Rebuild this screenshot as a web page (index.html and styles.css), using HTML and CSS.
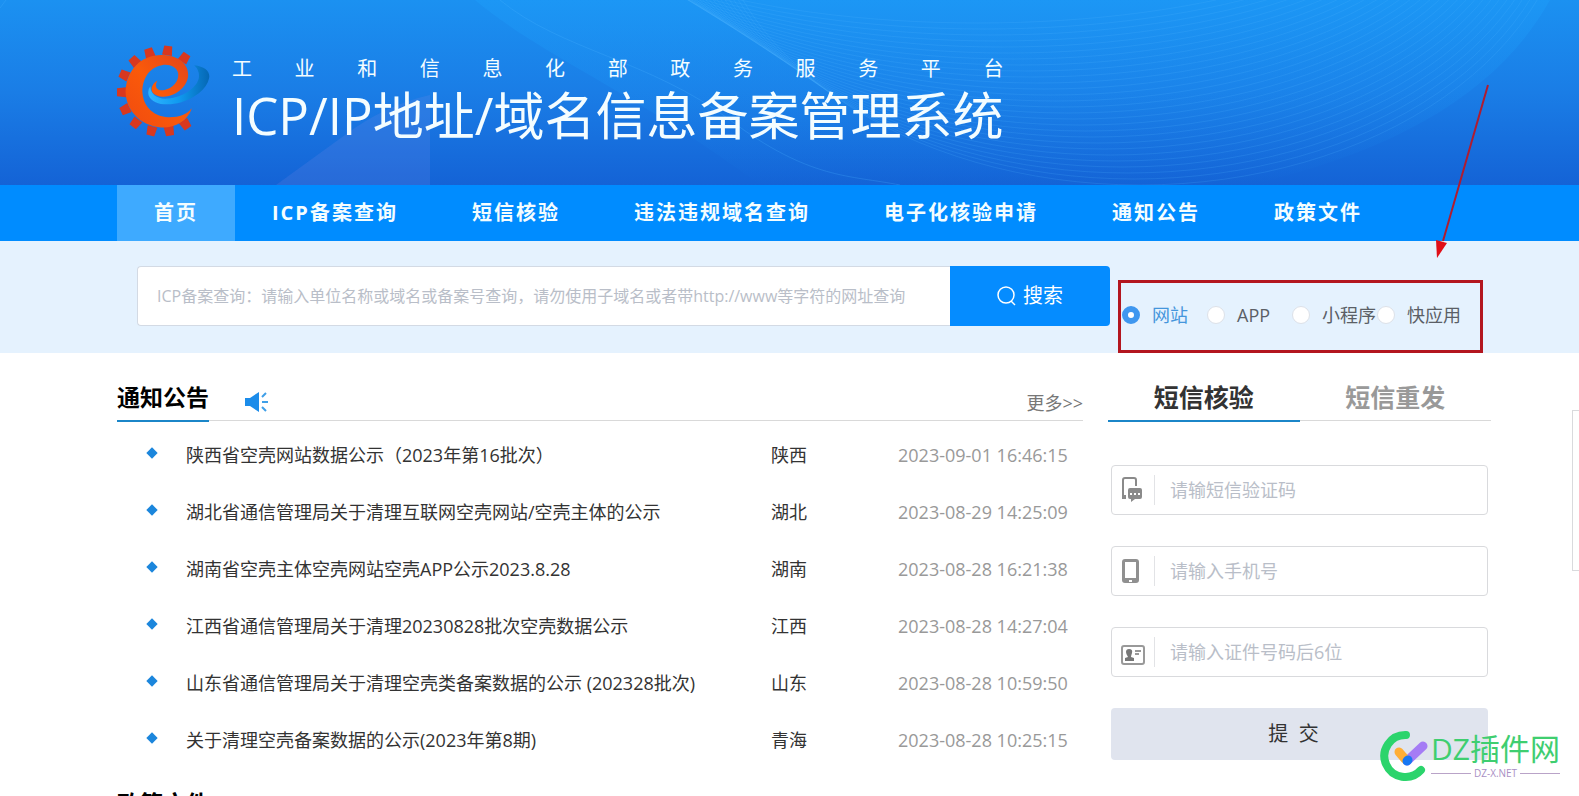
FILE: index.html
```
<!DOCTYPE html>
<html lang="zh-CN">
<head>
<meta charset="utf-8">
<meta name="viewport" content="width=device-width, initial-scale=1">
<title>ICP/IP地址/域名信息备案管理系统</title>
<link rel="stylesheet" href="styles.css">
</head>
<body>
<header class="banner">
  <svg class="banner-art" viewBox="0 0 1579 185" preserveAspectRatio="none" aria-hidden="true">
    <defs>
      <linearGradient id="glow" x1="0" y1="0" x2="0" y2="1">
        <stop offset="0" stop-color="#1ea4ff" stop-opacity=".3"/>
        <stop offset="1" stop-color="#1ea4ff" stop-opacity="0"/>
      </linearGradient>
    </defs>
    <path fill="url(#glow)" d="M475 0C540 55 640 95 760 185H1250C1400 150 1500 90 1550 0Z"/>
    <path fill="#8a8fe8" fill-opacity=".17" d="M276 185L345 135Q385 105 430 95V185Z"/>
    <path fill="none" stroke="#4ab4ff" stroke-opacity=".25" d="M500 0C560 50 650 60 730 120S850 175 900 185M0 8L6 0"/>
    <g fill="none" stroke="#55b8ff" stroke-opacity=".18">
      <ellipse cx="1140" cy="-115" rx="430" ry="300"/>
      <ellipse cx="1134" cy="-115" rx="430" ry="294"/>
      <ellipse cx="1128" cy="-115" rx="430" ry="288"/>
      <ellipse cx="1122" cy="-115" rx="430" ry="282"/>
      <ellipse cx="1116" cy="-115" rx="430" ry="276"/>
      <ellipse cx="1110" cy="-115" rx="430" ry="270"/>
      <ellipse cx="1104" cy="-115" rx="430" ry="264"/>
      <ellipse cx="1098" cy="-115" rx="430" ry="258"/>
      <ellipse cx="1092" cy="-115" rx="430" ry="252"/>
      <ellipse cx="1086" cy="-115" rx="430" ry="246"/>
      <ellipse cx="1080" cy="-115" rx="430" ry="240"/>
      <ellipse cx="1074" cy="-115" rx="430" ry="234"/>
      <ellipse cx="1068" cy="-115" rx="430" ry="228"/>
      <ellipse cx="1062" cy="-115" rx="430" ry="222"/>
      <ellipse cx="1056" cy="-115" rx="430" ry="216"/>
      <ellipse cx="1050" cy="-115" rx="430" ry="210"/>
      <ellipse cx="1044" cy="-115" rx="430" ry="204"/>
      <ellipse cx="1038" cy="-115" rx="430" ry="198"/>
      <ellipse cx="1032" cy="-115" rx="430" ry="192"/>
      <ellipse cx="1026" cy="-115" rx="430" ry="186"/>
      <ellipse cx="1020" cy="-115" rx="430" ry="180"/>
      <ellipse cx="1014" cy="-115" rx="430" ry="174"/>
      <ellipse cx="1008" cy="-115" rx="430" ry="168"/>
      <ellipse cx="1002" cy="-115" rx="430" ry="162"/>
      <ellipse cx="996" cy="-115" rx="430" ry="156"/>
      <ellipse cx="990" cy="-115" rx="430" ry="150"/>
      <ellipse cx="984" cy="-115" rx="430" ry="144"/>
      <ellipse cx="978" cy="-115" rx="430" ry="138"/>
    </g>
  </svg>
  <svg class="logo" viewBox="48 42 284 284" role="img" aria-label="工业和信息化部">
    <defs>
      <linearGradient id="swoosh" x1="0" y1="0" x2="1" y2="0">
        <stop offset="0" stop-color="#2fb4ff"/><stop offset=".5" stop-color="#109af0"/><stop offset="1" stop-color="#0567b4"/>
      </linearGradient>
      <linearGradient id="flame" x1="1" y1="0" x2="0" y2="1">
        <stop offset="0" stop-color="#e0431d"/><stop offset=".5" stop-color="#fa5a0a"/><stop offset="1" stop-color="#f04a10"/>
      </linearGradient>
      <path id="tooth" d="M-12 -14H12L15 14H-15Z"/>
    </defs>
    <g fill="#d8381f">
      <use href="#tooth" transform="translate(255 84) rotate(33)"/>
      <use href="#tooth" transform="translate(204 62) rotate(8)"/>
      <use href="#tooth" transform="translate(149 69) rotate(-18)"/>
      <use href="#tooth" transform="translate(104 94) rotate(-42)"/>
      <use href="#tooth" transform="translate(73 136) rotate(-66)"/>
      <use href="#tooth" transform="translate(65 188) rotate(-90)"/>
      <use href="#tooth" transform="translate(76 240) rotate(-116)"/>
      <use href="#tooth" transform="translate(107 281) rotate(-142)"/>
      <use href="#tooth" transform="translate(155 305) rotate(-166)"/>
      <use href="#tooth" transform="translate(209 305) rotate(170)"/>
      <use href="#tooth" transform="translate(258 285) rotate(146)"/>
    </g>
    <path fill="url(#swoosh)" d="M284 106C318 110 334 126 329 146C322 178 285 206 245 218C200 231 158 224 147 198Q142 182 152 170C152 196 175 210 205 207C250 202 290 176 298 146Q302 122 284 106Z"/>
    <path fill="url(#flame)" d="M277 236C264 276 224 296 185 294C120 290 77 240 77 185C79 120 125 75 185 75C240 75 268 105 266 138C262 176 222 203 188 201C150 198 146 170 173 152C161 174 175 185 195 181C220 176 238 155 236 132C233 110 207 102 187 106C147 112 126 150 128 190C132 235 165 261 205 263C238 264 262 255 277 236Z"/>
  </svg>
  <div class="brand">
    <p class="brand-sub">工业和信息化部政务服务平台</p>
    <h1 class="brand-title">ICP/IP地址/域名信息备案管理系统</h1>
  </div>
</header>

<nav class="nav">
  <a class="nav-item is-active" href="#">首页</a>
  <a class="nav-item" href="#">ICP备案查询</a>
  <a class="nav-item" href="#">短信核验</a>
  <a class="nav-item" href="#">违法违规域名查询</a>
  <a class="nav-item" href="#">电子化核验申请</a>
  <a class="nav-item" href="#">通知公告</a>
  <a class="nav-item" href="#">政策文件</a>
</nav>

<form class="search">
  <input class="search-input" type="text" aria-label="ICP备案查询" placeholder="ICP备案查询：请输入单位名称或域名或备案号查询，请勿使用子域名或者带http://www等字符的网址查询">
  <button class="search-button" type="button">
    <svg class="search-icon" viewBox="0 0 20 20" aria-hidden="true"><circle cx="9" cy="9" r="8"/><path d="M14 15L18 19"/></svg>
    搜索
  </button>
  <fieldset class="kinds">
    <label class="kind"><input type="radio" name="kind" checked><span>网站</span></label>
    <label class="kind"><input type="radio" name="kind"><span>APP</span></label>
    <label class="kind"><input type="radio" name="kind"><span>小程序</span></label>
    <label class="kind"><input type="radio" name="kind"><span>快应用</span></label>
  </fieldset>
</form>

<main class="content">
  <div class="left">
    <section class="notices">
      <div class="section-head">
        <h2 class="section-title">通知公告</h2>
        <svg class="speaker" viewBox="0 0 24 20" aria-hidden="true">
          <path fill="#1b8cea" d="M0 6H5L14 0V20L5 14H0Z"/>
          <path fill="none" stroke="#3f9fe8" stroke-width="2" d="M17 5L21 1M17 10H23M17 15L21 19"/>
        </svg>
        <a class="more" href="#">更多&gt;&gt;</a>
      </div>
      <table class="notice-table">
        <tbody>
          <tr><td class="mark"><i></i></td><td><a href="#">陕西省空壳网站数据公示（2023年第16批次）</a></td><td class="area">陕西</td><td class="time">2023-09-01 16:46:15</td></tr>
          <tr><td class="mark"><i></i></td><td><a href="#">湖北省通信管理局关于清理互联网空壳网站/空壳主体的公示</a></td><td class="area">湖北</td><td class="time">2023-08-29 14:25:09</td></tr>
          <tr><td class="mark"><i></i></td><td><a href="#">湖南省空壳主体空壳网站空壳APP公示2023.8.28</a></td><td class="area">湖南</td><td class="time">2023-08-28 16:21:38</td></tr>
          <tr><td class="mark"><i></i></td><td><a href="#">江西省通信管理局关于清理20230828批次空壳数据公示</a></td><td class="area">江西</td><td class="time">2023-08-28 14:27:04</td></tr>
          <tr><td class="mark"><i></i></td><td><a href="#">山东省通信管理局关于清理空壳类备案数据的公示 (202328批次)</a></td><td class="area">山东</td><td class="time">2023-08-28 10:59:50</td></tr>
          <tr><td class="mark"><i></i></td><td><a href="#">关于清理空壳备案数据的公示(2023年第8期)</a></td><td class="area">青海</td><td class="time">2023-08-28 10:25:15</td></tr>
        </tbody>
      </table>
    </section>
    <section class="policies">
      <div class="section-head"><h2 class="section-title">政策文件</h2></div>
    </section>
  </div>

  <section class="sms">
    <div class="tabs" role="tablist">
      <button class="tab is-active" type="button" role="tab" aria-selected="true">短信核验</button>
      <button class="tab" type="button" role="tab" aria-selected="false">短信重发</button>
    </div>
    <form class="sms-form">
      <label class="field">
        <svg class="field-icon" viewBox="0 0 24 26" aria-hidden="true">
          <path fill="none" stroke="#8a8a8a" stroke-width="2" d="M5 21H3Q2 21 2 19V3Q2 1 4 1H13Q15 1 15 3V9"/>
          <path fill="#8a8a8a" d="M1 18H5V22H1ZM9 11H19Q21 11 21 13V20Q21 22 19 22H14L10 25V22H9Q7 22 7 20V13Q7 11 9 11Z"/>
          <path stroke="#fff" stroke-width="2" stroke-dasharray="2 2" d="M9 17H19"/>
        </svg>
        <input type="text" aria-label="短信验证码" placeholder="请输短信验证码">
      </label>
      <label class="field">
        <svg class="field-icon" viewBox="0 0 24 26" aria-hidden="true">
          <path fill="#909090" fill-rule="evenodd" d="M4 1H15Q18 1 18 4V22Q18 25 15 25H4Q1 25 1 22V4Q1 1 4 1ZM4 4V20H15V4ZM8 22V24H11V22Z"/>
        </svg>
        <input type="tel" aria-label="手机号" placeholder="请输入手机号">
      </label>
      <label class="field">
        <svg class="field-icon" viewBox="0 0 24 26" aria-hidden="true">
          <rect x="1" y="7" width="22" height="18" rx="2" fill="none" stroke="#999" stroke-width="2"/>
          <path fill="#777" d="M8 10Q12 10 11 14Q10 17 10 18L13 19V22H4V19L7 18Q5 15 5 13Q5 10 8 10Z"/>
          <path stroke="#999" stroke-width="2" d="M14 12H20M14 15H18"/>
        </svg>
        <input type="text" aria-label="证件号码后6位" placeholder="请输入证件号码后6位">
      </label>
      <button class="submit" type="button">提&nbsp; 交</button>
    </form>
  </section>
</main>

<aside class="side-panel"></aside>

<svg class="arrow" viewBox="0 0 56 176" aria-hidden="true">
  <path fill="none" stroke="#b01c30" stroke-width="2" d="M53 2L8 158"/>
  <path fill="#e00f18" d="M1 157L12 160L2 175Z"/>
</svg>

<div class="watermark">
  <svg class="watermark-logo" viewBox="0 0 48 52" aria-hidden="true">
    <g fill="none" stroke-linecap="round">
      <path stroke="#2bd46c" stroke-width="8" d="M26 5A21 21 0 1 0 41 40"/>
      <path stroke="#a57cf5" stroke-width="9" d="M27 31L43 16"/>
      <path stroke="#ffae35" stroke-width="9" d="M19 22L25 29"/>
      <path stroke="#1877f2" stroke-width="9" d="M27 31L28 30"/>
    </g>
  </svg>
  <div class="watermark-text">
    <div class="watermark-name">DZ插件网</div>
    <div class="watermark-site">DZ-X.NET</div>
  </div>
</div>
</body>
</html>
```

FILE: styles.css
```
* {
  box-sizing: border-box;
}

body {
  position: relative;
  margin: 0;
  height: 100vh;
  overflow: hidden;
  background: #fff;
  color: #333;
  font: 18px/24px "Open Sans", "Noto Sans CJK SC", sans-serif;
}

a {
  color: inherit;
  text-decoration: none;
}

button,
input {
  font: inherit;
}

h1,
h2,
p {
  margin: 0;
}

.banner {
  position: relative;
  display: flex;
  align-items: flex-start;
  gap: 22px;
  padding: 44px 117px 42px 116px;
  background: linear-gradient(#1b91f1, #1a7de6 50%, #1463d6);
}

.banner-art {
  position: absolute;
  inset: 0;
  width: 100%;
  height: 100%;
}

.logo {
  position: relative;
  width: 94px;
  height: 94px;
}

.brand {
  position: relative;
  padding-top: 11px;
  color: #f4fdff;
}

.brand-sub {
  font-size: 20px;
  line-height: 28px;
  text-align-last: justify;
}

.brand-title {
  margin-top: 4px;
  font-size: 51px;
  font-weight: 400;
  line-height: 56px;
  white-space: nowrap;
}

.nav {
  display: flex;
  padding-left: 117px;
  background: #008cff;
}

.nav-item {
  padding: 0 37px;
  color: #f4fdff;
  font-size: 20px;
  font-weight: 700;
  line-height: 56px;
  letter-spacing: 2px;
  white-space: nowrap;
}

.nav-item.is-active {
  background: #3eaaff;
}

.search {
  display: flex;
  align-items: flex-start;
  padding: 25px 96px 0 137px;
  background: #e5f2fe;
}

.search-input {
  flex: 1;
  min-width: 0;
  height: 60px;
  padding: 0 19px;
  border: 1px solid #d3dae4;
  border-right: 0;
  border-radius: 4px 0 0 4px;
  background: #fff;
  font-size: 16px;
}

input::placeholder {
  color: #b9bec8;
  opacity: 1;
}

.search-button {
  display: flex;
  align-items: center;
  justify-content: center;
  gap: 6px;
  width: 160px;
  height: 60px;
  border: 0;
  border-radius: 0 4px 4px 0;
  background: #058cff;
  color: #fff;
  font-size: 20px;
}

.search-icon {
  width: 20px;
  height: 20px;
  fill: none;
  stroke: #fff;
  stroke-width: 1.5;
}

.kinds {
  display: flex;
  align-items: center;
  width: 365px;
  height: 73px;
  margin: 14px 0 0 8px;
  padding: 0 0 3px 1px;
  border: 3px solid #b3161f;
}

.kind {
  display: flex;
  align-items: center;
  flex: 0 0 85px;
  gap: 12px;
  color: #5b5f66;
  white-space: nowrap;
}

.kind input {
  appearance: none;
  flex: none;
  width: 18px;
  height: 18px;
  margin: 0;
  border: 1px solid #dde1e8;
  border-radius: 50%;
  background: #fff;
}

.kind input:checked {
  border: 6px solid #3f97ef;
}

.kind input:checked + span {
  color: #4596dc;
}

.content {
  display: grid;
  grid-template-columns: 1fr 383px;
  gap: 25px;
  padding: 28px 88px 0 117px;
}

.section-head {
  display: flex;
  align-items: flex-end;
  height: 40px;
  border-bottom: 1px solid #d9d9d9;
}

.section-title {
  height: 41px;
  margin-bottom: -2px;
  padding-top: 2px;
  border-bottom: 2px solid #1b86c8;
  color: #000;
  font-size: 23px;
  line-height: 28px;
}

.speaker {
  width: 24px;
  height: 20px;
  margin: 0 auto 8px 36px;
}

.more {
  margin-bottom: 5px;
  color: #777;
}

.notice-table {
  width: 100%;
  margin-top: 5px;
  border-collapse: collapse;
  table-layout: fixed;
}

.notice-table td {
  height: 57px;
  padding: 0;
  white-space: nowrap;
}

.notice-table .mark {
  width: 69px;
  padding-left: 31px;
}

.mark i {
  display: block;
  width: 8px;
  height: 8px;
  margin-bottom: 4px;
  background: #1b86dc;
  transform: rotate(45deg);
}

.notice-table .area {
  width: 127px;
}

.notice-table .time {
  width: 185px;
  color: #999;
}

.policies {
  margin-top: 19px;
}

.tabs {
  display: flex;
  height: 40px;
  border-bottom: 1px solid #d9d9d9;
}

.tab {
  flex: 1;
  height: 41px;
  padding: 0 0 7px;
  border: 0;
  border-bottom: 2px solid transparent;
  background: none;
  color: #999;
  font-size: 25px;
  font-weight: 700;
  line-height: 28px;
}

.tab.is-active {
  border-color: #1b86c8;
  color: #333;
}

.sms-form {
  display: flex;
  flex-direction: column;
  gap: 31px;
  padding: 44px 3px 0;
}

.field {
  display: flex;
  align-items: center;
  height: 50px;
  padding-left: 9px;
  border: 1px solid #d9dadd;
  border-radius: 4px;
}

.field-icon {
  flex: none;
  width: 24px;
  height: 26px;
}

.field input {
  flex: 1;
  min-width: 0;
  height: 30px;
  margin-left: 9px;
  padding: 0 0 0 15px;
  border: 0;
  border-left: 1px solid #e2e3e6;
  background: none;
}

.submit {
  height: 52px;
  padding: 0 16px 0 4px;
  border: 0;
  border-radius: 4px;
  background: #e0e4ee;
  color: #333;
  font-size: 20px;
}

.side-panel {
  position: absolute;
  top: 410px;
  right: 0;
  width: 7px;
  height: 161px;
  border: 1px solid #d9dadd;
  border-right: 0;
}

.arrow {
  position: absolute;
  top: 83px;
  right: 88px;
  width: 56px;
  height: 176px;
}

.watermark {
  position: absolute;
  top: 730px;
  right: 19px;
  display: flex;
  gap: 3px;
}

.watermark-logo {
  width: 48px;
  height: 52px;
}

.watermark-name {
  color: #3fce70;
  font-size: 30px;
  line-height: 38px;
}

.watermark-site {
  display: flex;
  align-items: center;
  gap: 3px;
  color: #a98fc4;
  font-size: 10px;
  line-height: 10px;
}

.watermark-site::before,
.watermark-site::after {
  content: "";
  flex: 1;
  height: 1px;
  background: #b9a3c8;
}
```
